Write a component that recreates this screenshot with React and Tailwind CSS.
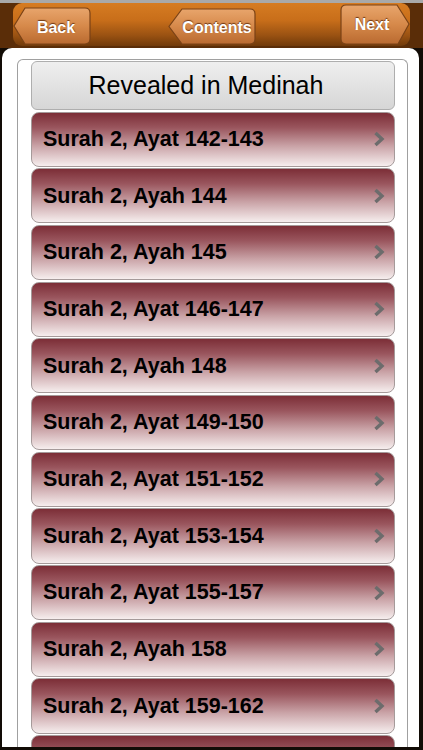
import React from "react";

const items = [
  "Surah 2, Ayat 142-143",
  "Surah 2, Ayah 144",
  "Surah 2, Ayah 145",
  "Surah 2, Ayat 146-147",
  "Surah 2, Ayah 148",
  "Surah 2, Ayat 149-150",
  "Surah 2, Ayat 151-152",
  "Surah 2, Ayat 153-154",
  "Surah 2, Ayat 155-157",
  "Surah 2, Ayah 158",
  "Surah 2, Ayat 159-162",
  "",
];

function BtnShape({ w, h, d, id }) {
  return (
    <svg width={w} height={h} className="absolute inset-0" viewBox={`0 0 ${w} ${h}`}>
      <defs>
        <linearGradient id={id} x1="0" y1="0" x2="0" y2="1">
          <stop offset="0" stopColor="#e8a56c" />
          <stop offset="0.5" stopColor="#d6894a" />
          <stop offset="1" stopColor="#b96a30" />
        </linearGradient>
      </defs>
      <path d={d} fill={`url(#${id})`} stroke="#7a4216" strokeWidth="1.2" />
    </svg>
  );
}

function HeaderBtn({ label, w, h, d, id, className, textClass }) {
  return (
    <div className={`relative shrink-0 ${className}`} style={{ width: w, height: h }}>
      <BtnShape w={w} h={h} d={d} id={id} />
      <div
        className={`relative flex h-full items-center justify-center text-[16px] font-bold text-white [text-shadow:0_-1px_1px_rgba(80,30,0,0.8)] ${textClass}`}
        style={{ fontFamily: '"Liberation Sans", Arial, sans-serif' }}
      >
        {label}
      </div>
    </div>
  );
}

function Chevron() {
  return (
    <svg width="12" height="16" viewBox="0 0 12 16" className="shrink-0">
      <polyline points="2.5,2 9,8 2.5,14" fill="none" stroke="#6c6c6c" strokeWidth="3.4" strokeLinejoin="miter" />
    </svg>
  );
}

export default function App() {
  return (
    <div
      className="flex h-[750px] w-[423px] flex-col overflow-hidden bg-[#120c06]"
      style={{ fontFamily: '"Liberation Sans", Arial, sans-serif' }}
    >
      {/* top bar */}
      <div className="h-[48px] shrink-0 border-t-[3px] border-[#a9a9a9] bg-[#5a2d08]">
        <div className="mx-[13px] flex h-[43px] rounded-[9px] bg-[linear-gradient(to_bottom,#d67c22_0%,#c86e1a_40%,#9a5212_75%,#703a0a_100%)]">
          <HeaderBtn
            label="Back"
            w={78}
            h={38}
            id="gb"
            className="mt-[4px]"
            textClass="pl-[8px] pt-[3px]"
            d="M12,1 H72 Q77,1 77,6 V32 Q77,37 72,37 H12 L1,19 Z"
          />
          <HeaderBtn
            label="Contents"
            w={88}
            h={37}
            id="gc"
            className="ml-[77px] mt-[5px]"
            textClass="pl-[10px] pt-[3px] text-[15.5px]"
            d="M14,1 H82 Q87,1 87,6 V31 Q87,36 82,36 H14 L1,18.5 Z"
          />
          <HeaderBtn
            label="Next"
            w={70}
            h={41}
            id="gn"
            className="ml-auto mt-[1px]"
            textClass="pr-[6px] pt-[1px]"
            d="M6,1 H57 L69,20 L58,40 H6 Q1,40 1,35 V6 Q1,1 6,1 Z"
          />
        </div>
      </div>

      {/* white panel */}
      <div className="ml-[2px] mr-[4px] h-[699px] shrink-0 overflow-hidden rounded-t-[10px] bg-white pl-[15px] pr-[11px] pt-[11px]">
        <div className="h-full overflow-hidden rounded-t-[6px] border-x border-t border-[#a0a0a0] pl-[13px] pr-[12px] pt-[1px]">
          <div className="flex h-[49px] items-center justify-center rounded-[6px] border border-[#aeaeae] bg-[linear-gradient(to_bottom,#efefef,#d6d6d6)]">
            <span className="pr-[14px] text-[25px] text-black">Revealed in Medinah</span>
          </div>
          <div className="mt-[1.5px] flex flex-col gap-[1.5px]">
            {items.map((t, i) => (
              <div
                key={i}
                className="flex h-[55.2px] shrink-0 items-center justify-between rounded-[8px] border border-[#a59a9a] bg-[linear-gradient(to_bottom,#7c2e37_0%,#9a565e_28%,#c9a2a6_62%,#f6eeee_100%)] pl-[11px] pr-[9px]"
              >
                <span className="text-[21.5px] font-bold text-black">{t}</span>
                {t && <Chevron />}
              </div>
            ))}
          </div>
        </div>
      </div>
      <div className="h-[3px] shrink-0 bg-[#120c06]" />
    </div>
  );
}
